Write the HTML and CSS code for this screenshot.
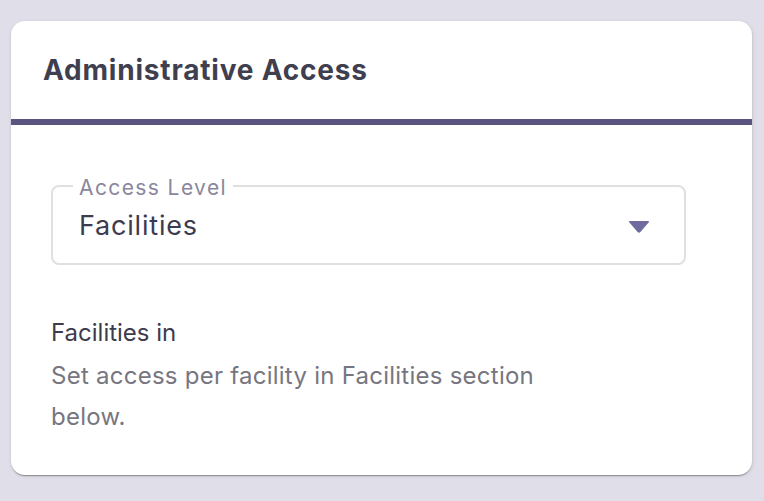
FILE: index.html
```html
<!DOCTYPE html>
<html lang="en">
<head>
<meta charset="utf-8">
<title>Administrative Access</title>
<link rel="stylesheet" href="styles.css">
</head>
<body>
<div class="page">
  <section class="card">
    <header class="card-header">
      <h2 class="card-title">Administrative Access</h2>
    </header>
    <div class="card-body">
      <div class="select">
        <fieldset class="outline"><legend class="legend"><span>Access Level</span></legend></fieldset>
        <label class="select-label">Access Level</label>
        <div class="select-value">Facilities</div>
        <svg class="select-arrow" width="24" height="14" viewBox="0 0 24 14" aria-hidden="true">
          <path d="M3 1 H21 Q23 1 21.6 2.6 L13.4 12 Q12 13.4 10.6 12 L2.4 2.6 Q1 1 3 1 Z" fill="#6f6b9f"/>
        </svg>
      </div>
      <div class="info">
        <p class="info-title">Facilities in</p>
        <p class="info-text">Set access per facility in Facilities section below.</p>
      </div>
    </div>
  </section>
</div>
</body>
</html>
```

FILE: styles.css
```css
* { box-sizing: border-box; }
html, body { margin: 0; padding: 0; }
body {
  background: #e0dfe9;
  font-family: Inter, "Open Sans", sans-serif;
  width: 764px;
  height: 501px;
  overflow: hidden;
}
.page {
  padding: 21px 12px 0 11px;
}
.card {
  width: 741px;
  height: 454px;
  background: #fff;
  border-radius: 14px;
  box-shadow: 0 2px 1px -1px rgba(0,0,0,0.25), 0 1px 2px 0 rgba(0,0,0,0.14), 1px 1px 4px 0 rgba(0,0,0,0.08);
  overflow: hidden;
}
.card-header {
  height: 104px;
  padding: 32px 32px 0 32px;
  border-bottom: 6px solid #5a5481;
}
.card-title {
  margin: 0;
  font-size: 28px;
  line-height: 34px;
  font-weight: 700;
  color: #403f50;
  letter-spacing: 0.8px;
}
.card-body {
  padding: 61px 40px 0 40px;
}
.select {
  position: relative;
  width: 635px;
  height: 79px;
}
.outline {
  position: absolute;
  inset: -10px 0 0 0;
  margin: 0;
  padding: 0 20px;
  border: 2px solid #e0e0e0;
  border-radius: 8px;
  pointer-events: none;
}
.legend {
  padding: 0;
  font-size: 21px;
  letter-spacing: 1.4px;
  visibility: hidden;
  height: 20px;
  line-height: 20px;
}
.legend span {
  padding: 0 6px;
}
.select-label {
  position: absolute;
  left: 28px;
  top: -9px;
  font-size: 21px;
  line-height: 22px;
  letter-spacing: 1.4px;
  color: #8a879c;
  font-weight: 400;
}
.select-value {
  position: absolute;
  left: 28px;
  top: 23px;
  font-size: 27px;
  line-height: 34px;
  letter-spacing: 0.8px;
  color: #3d3b4d;
}
.select-arrow {
  position: absolute;
  right: 35px;
  top: 34px;
}
.info {
  margin-top: 47px;
}
.info p {
  margin: 0;
  font-size: 24px;
  line-height: 41px;
}
.info .info-title {
  color: #3d3b4d;
  margin-bottom: 2px;
}
.info .info-text {
  color: #777680;
  width: 530px;
  letter-spacing: 0.25px;
}
```
